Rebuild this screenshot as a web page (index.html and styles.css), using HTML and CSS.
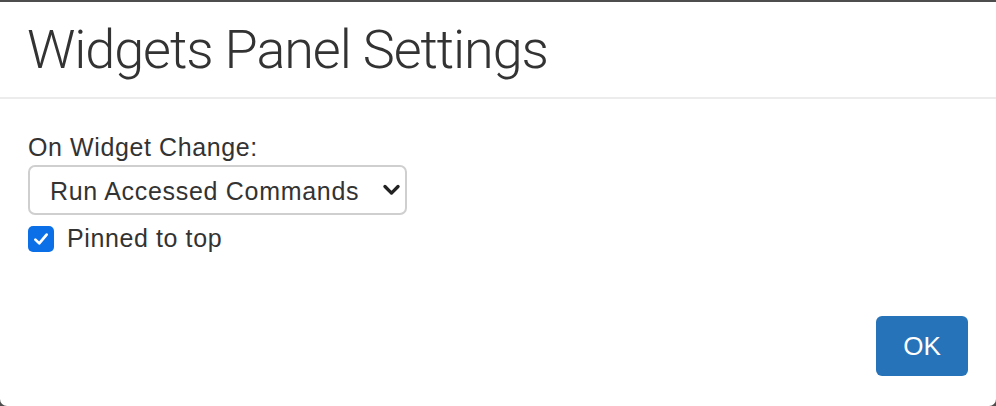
FILE: index.html
```html
<!DOCTYPE html>
<html>
<head>
<meta charset="utf-8">
<link rel="stylesheet" href="styles.css">
</head>
<body>
<div class="modal">
  <div class="modal-header">
    <h4 class="modal-title">Widgets Panel Settings</h4>
  </div>
  <div class="modal-body">
    <label class="field-label" for="onchange">On Widget Change:</label>
    <div class="select-wrap">
      <select id="onchange" class="select">
        <option>Run Accessed Commands</option>
      </select>
      <svg class="chevron" viewBox="0 0 16 16" width="19" height="19" aria-hidden="true">
        <path d="M2.5 5.5 L8 11 L13.5 5.5" fill="none" stroke="#222" stroke-width="2.8" stroke-linecap="round" stroke-linejoin="round"/>
      </svg>
    </div>
    <label class="check-row">
      <span class="checkbox">
        <svg viewBox="0 0 16 16" width="16" height="16" aria-hidden="true">
          <path d="M3.5 8.5 L6.6 11.5 L12.5 4.5" fill="none" stroke="#fff" stroke-width="2.2" stroke-linecap="round" stroke-linejoin="round"/>
        </svg>
      </span>
      <span class="check-text">Pinned to top</span>
    </label>
  </div>
  <div class="modal-footer">
    <button class="btn-ok" type="button">OK</button>
  </div>
</div>
</body>
</html>
```

FILE: styles.css
```css
html, body {
  margin: 0;
  padding: 0;
  height: 100%;
}
body {
  background: #4d4d4d;
  overflow: hidden;
  font-family: "Liberation Sans", Arial, sans-serif;
  color: #333;
}
.modal {
  margin-top: 2px;
  height: 404px;
  background: #fff;
  border-radius: 0 0 7px 7px;
  display: flex;
  flex-direction: column;
  box-sizing: border-box;
}
.modal-header {
  height: 95px;
  border-bottom: 2px solid #ececec;
  padding: 0 27px;
  display: flex;
  align-items: center;
}
.modal-title {
  margin: 0;
  font-family: Roboto, "Liberation Sans", sans-serif;
  font-weight: 300;
  font-size: 54px;
  line-height: 1;
  color: #333;
  letter-spacing: -1.1px;
  padding-top: 1px;
}
.modal-body {
  padding: 33px 28px 0;
  display: flex;
  flex-direction: column;
  align-items: flex-start;
  flex: 1;
}
.field-label {
  font-size: 25px;
  line-height: 30px;
  color: #333;
  letter-spacing: 0.6px;
}
.select-wrap {
  position: relative;
  margin-top: 3px;
  width: 379px;
  height: 50px;
}
.select {
  appearance: none;
  -webkit-appearance: none;
  width: 100%;
  height: 100%;
  box-sizing: border-box;
  border: 2px solid #cfcfcf;
  border-radius: 7px;
  background: #fff;
  padding: 2px 0 0 20px;
  font-family: "Liberation Sans", Arial, sans-serif;
  font-size: 25px;
  letter-spacing: 0.7px;
  color: #333;
  margin: 0;
}
.chevron {
  position: absolute;
  right: 6px;
  top: 15px;
  pointer-events: none;
}
.check-row {
  display: flex;
  align-items: center;
  gap: 13px;
  margin-top: 9px;
}
.checkbox {
  width: 26px;
  height: 26px;
  border-radius: 5px;
  background: #0b6fe8;
  display: flex;
  align-items: center;
  justify-content: center;
}
.checkbox svg {
  width: 20px;
  height: 20px;
}
.check-text {
  font-size: 25px;
  letter-spacing: 0.6px;
  color: #333;
}
.modal-footer {
  display: flex;
  justify-content: flex-end;
  padding: 0 28px 30px;
}
.btn-ok {
  width: 92px;
  height: 60px;
  border: none;
  border-radius: 6px;
  background: #2673b9;
  color: #fff;
  font-family: "Liberation Sans", Arial, sans-serif;
  font-size: 26px;
  padding: 0;
}
```
